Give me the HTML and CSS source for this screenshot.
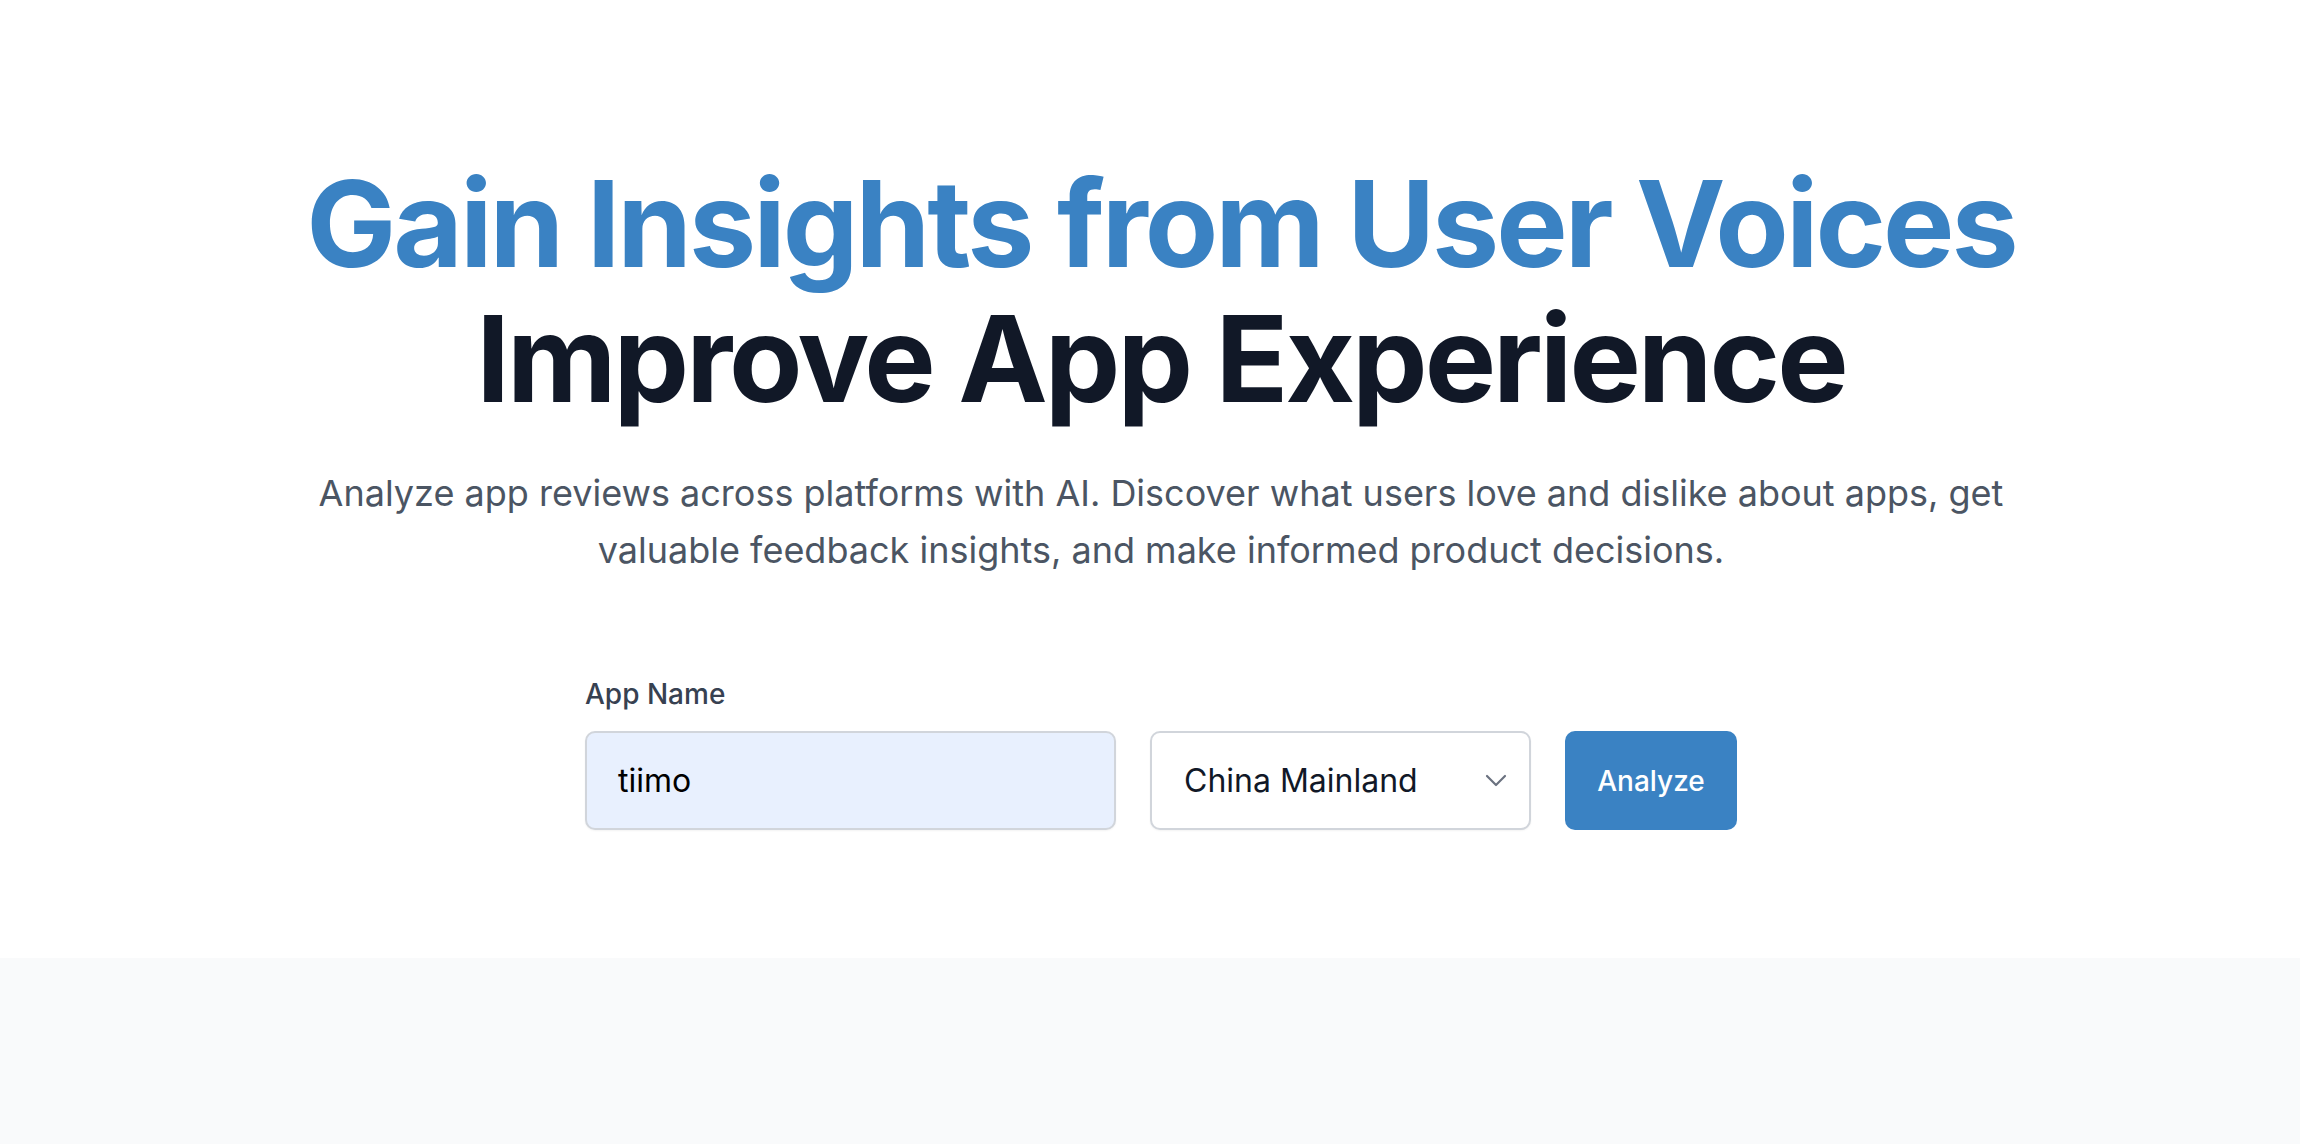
FILE: index.html
```html
<!DOCTYPE html>
<html>
<head>
<meta charset="utf-8">
<link rel="stylesheet" href="styles.css">
</head>
<body>
<section class="hero">
  <h1 class="title">
    <span class="title-blue">Gain Insights from User Voices</span>
    <span class="title-dark">Improve App Experience</span>
  </h1>
  <p class="lead">Analyze app reviews across platforms with AI. Discover what users love and dislike about apps, get valuable feedback insights, and make informed product decisions.</p>
  <form class="search">
    <label class="label" for="app">App Name</label>
    <div class="row">
      <div class="input">tiimo</div>
      <div class="select">
        <span>China Mainland</span>
        <svg class="chev" width="22" height="14" viewBox="0 0 22 14" fill="none" stroke="#6b7280" stroke-width="2.2" stroke-linecap="round" stroke-linejoin="round"><path d="M2 2l9 9 9-9"/></svg>
      </div>
      <button type="button" class="btn">Analyze</button>
    </div>
  </form>
</section>
<section class="lower"></section>
</body>
</html>
```

FILE: styles.css
```css
* { box-sizing: border-box; }
html, body { margin: 0; padding: 0; }
body {
  font-family: Inter, "Noto Sans", sans-serif;
  background: #ffffff;
  color: #111827;
}
.hero {
  height: 958px;
  padding-top: 156px;
  padding-left: 22px;
  display: flex;
  flex-direction: column;
  align-items: center;
}
.title {
  margin: 0;
  font-size: 120px;
  font-weight: 700;
  line-height: 135px;
  letter-spacing: -0.025em;
  text-align: center;
}
.title span { display: block; }
.title-blue { color: #3a82c3; }
.title-dark { color: #111827; }
.lead {
  margin: 39px 0 0;
  width: 1720px;
  text-align: center;
  font-size: 36px;
  line-height: 57px;
  color: #4b5563;
}
.search {
  margin-top: 98px;
  width: 1152px;
}
.label {
  display: block;
  font-size: 28px;
  line-height: 34px;
  font-weight: 500;
  color: #374151;
  margin-bottom: 20px;
}
.row {
  display: flex;
  gap: 34px;
}
.input {
  width: 531px;
  height: 99px;
  background: #e8f0fe;
  border: 2px solid #d1d5db;
  border-radius: 10px;
  padding: 0 31px;
  display: flex;
  align-items: center;
  font-size: 32px;
  color: #000;
  box-shadow: 0 1px 2px rgba(0,0,0,0.05);
}
.select {
  width: 381px;
  height: 99px;
  background: #fff;
  border: 2px solid #d1d5db;
  border-radius: 10px;
  padding: 0 22px 0 32px;
  display: flex;
  align-items: center;
  justify-content: space-between;
  font-size: 32px;
  color: #111827;
  box-shadow: 0 1px 2px rgba(0,0,0,0.05);
}
.chev { display: block; }
.btn {
  width: 172px;
  height: 99px;
  border: 0;
  border-radius: 10px;
  background: #3a82c3;
  color: #fff;
  font-family: inherit;
  font-size: 28px;
  font-weight: 500;
}
.lower {
  height: 186px;
  background: #f9fafb;
}
```
